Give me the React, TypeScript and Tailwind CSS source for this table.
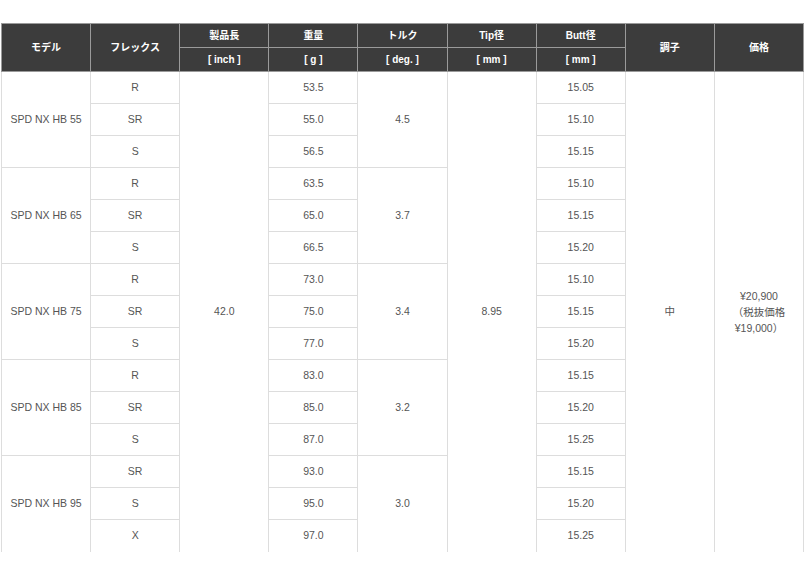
import React from "react";

const groups = [
  { model: "SPD NX HB 55", torque: "4.5", rows: [["R", "53.5", "15.05"], ["SR", "55.0", "15.10"], ["S", "56.5", "15.15"]] },
  { model: "SPD NX HB 65", torque: "3.7", rows: [["R", "63.5", "15.10"], ["SR", "65.0", "15.15"], ["S", "66.5", "15.20"]] },
  { model: "SPD NX HB 75", torque: "3.4", rows: [["R", "73.0", "15.10"], ["SR", "75.0", "15.15"], ["S", "77.0", "15.20"]] },
  { model: "SPD NX HB 85", torque: "3.2", rows: [["R", "83.0", "15.15"], ["SR", "85.0", "15.20"], ["S", "87.0", "15.25"]] },
  { model: "SPD NX HB 95", torque: "3.0", rows: [["SR", "93.0", "15.15"], ["S", "95.0", "15.20"], ["X", "97.0", "15.25"]] },
];

const th = "border border-[#9a9a9a] bg-[#3c3c3c] text-white font-bold text-[10px] text-center align-middle p-0";
const td = "border border-[#dddddd] text-[10.5px] text-[#555] text-center align-middle p-0 font-normal";
const tdLast = td + " border-b-0";

export default function App() {
  return (
    <div
      className="bg-white w-[805px] h-[575px] overflow-hidden pt-[23px] pl-[1px]"
      style={{ fontFamily: '"Liberation Sans", "Noto Sans CJK JP", sans-serif' }}
    >
      <table className="table-fixed border-collapse w-[803px]">
        <colgroup>
          {Array.from({ length: 9 }).map((_, i) => (
            <col key={i} className="w-[89px]" />
          ))}
        </colgroup>
        <thead>
          <tr className="h-[24px]">
            <th rowSpan={2} className={th}>モデル</th>
            <th rowSpan={2} className={th}>フレックス</th>
            <th className={th}>製品長</th>
            <th className={th}>重量</th>
            <th className={th}>トルク</th>
            <th className={th}>Tip径</th>
            <th className={th}>Butt径</th>
            <th rowSpan={2} className={th}>調子</th>
            <th rowSpan={2} className={th}>価格</th>
          </tr>
          <tr className="h-[24px]">
            <th className={th}>[ inch ]</th>
            <th className={th}>[ g ]</th>
            <th className={th}>[ deg. ]</th>
            <th className={th}>[ mm ]</th>
            <th className={th}>[ mm ]</th>
          </tr>
        </thead>
        <tbody>
          {groups.map((g, gi) =>
            g.rows.map((r, ri) => {
              const lastGroup = gi === groups.length - 1;
              const lastRow = lastGroup && ri === 2;
              const c = lastRow ? tdLast : td;
              return (
                <tr key={`${gi}-${ri}`} className="h-[32px]">
                  {ri === 0 && (
                    <td rowSpan={3} className={lastGroup ? tdLast : td}>{g.model}</td>
                  )}
                  <td className={c}>{r[0]}</td>
                  {gi === 0 && ri === 0 && (
                    <td rowSpan={15} className={tdLast}>42.0</td>
                  )}
                  <td className={c}>{r[1]}</td>
                  {ri === 0 && (
                    <td rowSpan={3} className={lastGroup ? tdLast : td}>{g.torque}</td>
                  )}
                  {gi === 0 && ri === 0 && (
                    <td rowSpan={15} className={tdLast}>8.95</td>
                  )}
                  <td className={c}>{r[2]}</td>
                  {gi === 0 && ri === 0 && (
                    <td rowSpan={15} className={tdLast}>中</td>
                  )}
                  {gi === 0 && ri === 0 && (
                    <td rowSpan={15} className={tdLast + " leading-[16px]"}>
                      ¥20,900
                      <br />
                      （税抜価格
                      <br />
                      ¥19,000）
                    </td>
                  )}
                </tr>
              );
            })
          )}
        </tbody>
      </table>
    </div>
  );
}
